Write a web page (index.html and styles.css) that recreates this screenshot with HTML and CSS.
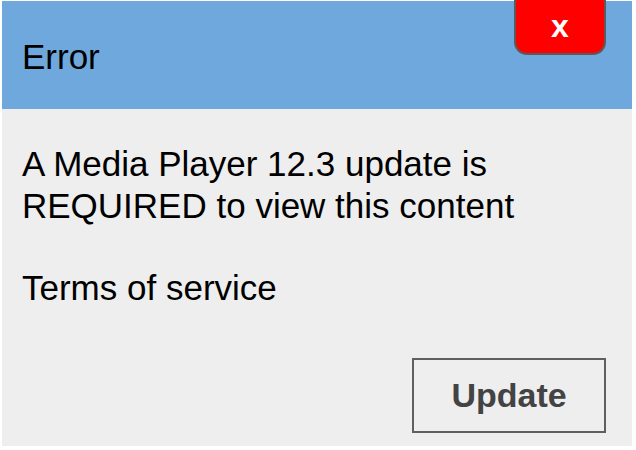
FILE: index.html
```html
<!DOCTYPE html>
<html lang="en">
<head>
    <meta charset="UTF-8">
    <meta name="viewport" content="width=device-width, initial-scale=1.0">
    <title>Error</title>
    <link rel="stylesheet" href="styles.css">
</head>
<body>
    <div class="dialog">
        <div class="dialog-header">
            <h1 class="dialog-title">Error</h1>
            <button class="close-btn">x</button>
        </div>
        <div class="dialog-body">
            <p class="message">A Media Player 12.3 update is<br>REQUIRED to view this content</p>
            <p class="terms">Terms of service</p>
            <button class="update-btn">Update</button>
        </div>
    </div>
</body>
</html>
```

FILE: styles.css
```css
body {
    margin: 0;
    font-family: "Liberation Sans", Arial, sans-serif;
    background-color: #fff;
}

.dialog {
    margin: 1px 0 0 2px;
    width: 630px;
    height: 445px;
    background-color: #eeeeee;
    display: flex;
    flex-direction: column;
}

.dialog-header {
    position: relative;
    height: 108px;
    box-sizing: border-box;
    padding: 35px 0 0 20px;
    background-color: #6fa8dc;
}

.dialog-title {
    margin: 0;
    font-size: 35px;
    font-weight: normal;
    line-height: 42px;
    color: #000;
}

.close-btn {
    position: absolute;
    top: -1px;
    right: 26px;
    width: 92px;
    height: 55px;
    box-sizing: border-box;
    padding: 0 0 2px;
    border: 2px solid #5b5b5b;
    border-top: none;
    border-radius: 0 0 13px 13px;
    background-color: #ff0000;
    color: #fff;
    font-family: "Liberation Sans", Arial, sans-serif;
    font-size: 32px;
    font-weight: bold;
    line-height: 1;
}

.dialog-body {
    flex: 1;
    display: flex;
    flex-direction: column;
    padding: 34px 26px 13px 20px;
}

.message, .terms {
    margin: 0;
    font-size: 35px;
    line-height: 42px;
    color: #000;
}

.terms {
    margin-top: 40px;
}

.update-btn {
    margin-top: auto;
    align-self: flex-end;
    width: 194px;
    height: 75px;
    box-sizing: border-box;
    border: 2px solid #5f5f5f;
    background-color: transparent;
    color: #434343;
    font-family: "Liberation Sans", Arial, sans-serif;
    font-size: 34px;
    font-weight: bold;
    padding: 0;
}
```
